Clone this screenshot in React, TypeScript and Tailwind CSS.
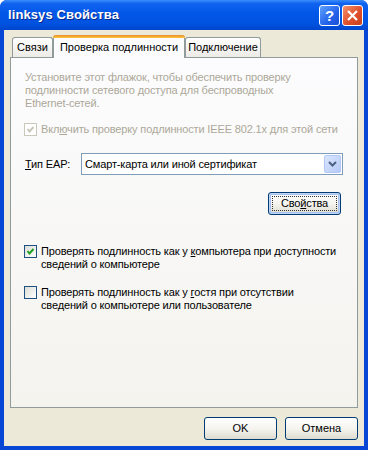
import React from "react";

const font = { fontFamily: '"Liberation Sans", Arial, sans-serif' };

function Check({ checked, disabled }: { checked?: boolean; disabled?: boolean }) {
  return (
    <div
      className={
        "w-[13px] h-[13px] shrink-0 border " +
        (disabled
          ? "border-[#cac8bb] bg-white"
          : "border-[#1c5180] bg-gradient-to-br from-[#dcdcd7] to-white")
      }
    >
      {checked && (
        <svg width="11" height="11" viewBox="0 0 11 11" className="block">
          <path
            d="M2.5 5 L4.5 7.5 L8.5 3"
            fill="none"
            stroke={disabled ? "#c9c7ba" : "#21a121"}
            strokeWidth="2"
          />
        </svg>
      )}
    </div>
  );
}

function XPButton({ children, focused, w }: { children: React.ReactNode; focused?: boolean; w: string }) {
  return (
    <div
      className={
        w +
        " h-[23px] rounded-[3px] border border-[#003c74] bg-gradient-to-b from-white via-[#f5f4ef] to-[#dedcd0] flex items-center justify-center text-[11px] text-black whitespace-nowrap " +
        (focused ? "shadow-[inset_0_0_0_1px_#c0d4f6,inset_0_0_0_2px_#a9c1ef]" : "")
      }
    >
      <div
        className={
          "flex items-center justify-center w-[calc(100%-8px)] h-[calc(100%-8px)] " +
          (focused ? "outline outline-1 outline-dotted outline-[#333]" : "")
        }
      >
        {children}
      </div>
    </div>
  );
}

export default function App() {
  return (
    <div
      className="w-[368px] h-[450px] flex flex-col bg-[#0847d6] rounded-t-[7px] overflow-hidden"
      style={font}
    >
      {/* Title bar */}
      <div className="h-[30px] shrink-0 flex items-center pl-[8px] pr-[5px] bg-[linear-gradient(to_bottom,#3b8cfc_0%,#0f63ee_12%,#0357e8_45%,#0052e0_80%,#0045cc_100%)]">
        <div className="flex-1 text-white font-bold text-[13px] [text-shadow:1px_1px_#0a2a8a] tracking-[0.1px]">
          linksys Свойства
        </div>
        <div className="flex gap-[2px] items-center">
          <div className="w-[21px] h-[21px] rounded-[3px] border border-white bg-[linear-gradient(135deg,#5fa2ff,#2563ea_60%,#1a4fd6)] flex items-center justify-center text-white font-bold text-[15px] leading-none">
            ?
          </div>
          <div className="w-[21px] h-[21px] rounded-[3px] border border-white bg-[linear-gradient(135deg,#f3936e,#e0512b_55%,#c8401e)] flex items-center justify-center">
            <svg width="13" height="13" viewBox="0 0 13 13">
              <path d="M2 2 L11 11 M11 2 L2 11" stroke="white" strokeWidth="2.2" />
            </svg>
          </div>
        </div>
      </div>

      {/* Body */}
      <div className="flex-1 mx-[4px] mb-[4px] bg-[#ece9d8] flex flex-col px-[6px] pt-[4px] pb-[6px]">
        {/* Tabs */}
        <div className="h-[23px] flex items-end pl-[2px] text-[11px] text-black relative z-10 whitespace-nowrap">
          <div className="w-[41px] h-[20px] border border-b-0 border-[#919b9c] rounded-t-[3px] bg-gradient-to-b from-white to-[#ecebe6] flex items-center justify-center">
            Связи
          </div>
          <div className="w-[132px] h-[23px] border-x border-[#919b9c] rounded-t-[3px] bg-[#fcfcfe] flex flex-col -mb-[1px]">
            <div className="h-[3px] rounded-t-[3px] bg-gradient-to-b from-[#e68b2c] to-[#ffc73c] -mx-[1px]" />
            <div className="flex-1 flex items-center justify-center pb-[1px]">Проверка подлинности</div>
          </div>
          <div className="w-[76px] h-[20px] border border-b-0 border-[#919b9c] rounded-t-[3px] bg-gradient-to-b from-white to-[#ecebe6] flex items-center justify-center">
            Подключение
          </div>
        </div>

        {/* Panel */}
        <div className="h-[351px] shrink-0 border border-[#919b9c] bg-gradient-to-b from-[#fcfcfe] to-[#f4f3ee] pl-[14px] pr-[4px] pt-[13px] text-[11px] leading-[13px] text-black whitespace-nowrap tracking-[-0.15px]">
          <div className="text-[#aca899]">
            Установите этот флажок, чтобы обеспечить проверку
            <br />
            подлинности сетевого доступа для беспроводных
            <br />
            Ethernet-сетей.
          </div>
          <div className="mt-[13px] flex items-center gap-[4px] -ml-[1px] text-[#aca899]">
            <Check checked disabled />
            <span>
              Вкл<span className="underline">ю</span>чить проверку подлинности IEEE 802.1x для этой сети
            </span>
          </div>

          <div className="mt-[17px] flex items-center">
            <div className="w-[56px]">
              <span className="underline">Т</span>ип EAP:
            </div>
            <div className="w-[262px] h-[22px] border border-[#7f9db9] bg-white flex items-center pl-[3px] pr-[1px]">
              <div className="flex-1">Смарт-карта или иной сертификат</div>
              <div className="w-[17px] h-[18px] rounded-[2px] border border-[#b4c8f6] bg-gradient-to-br from-[#dbe6fd] to-[#b4caf7] flex items-center justify-center">
                <svg width="9" height="6" viewBox="0 0 9 6">
                  <path d="M1 1 L4.5 4.5 L8 1" fill="none" stroke="#4d6185" strokeWidth="2" />
                </svg>
              </div>
            </div>
          </div>

          <div className="mt-[17px] flex justify-end pr-[12px]">
            <XPButton w="w-[73px]" focused>
              Сво<span className="underline">й</span>ства
            </XPButton>
          </div>

          <div className="mt-[30px] flex items-start gap-[4px] -ml-[1px]">
            <Check checked />
            <div>
              Проверять подлинность как у <span className="underline">к</span>омпьютера при доступности
              <br />
              сведений о компьютере
            </div>
          </div>

          <div className="mt-[15px] flex items-start gap-[4px] -ml-[1px]">
            <Check />
            <div>
              Проверять подлинность как у <span className="underline">г</span>остя при отсутствии
              <br />
              сведений о компьютере или пользователе
            </div>
          </div>
        </div>

        {/* Buttons */}
        <div className="mt-[9px] flex justify-end gap-[8px]">
          <XPButton w="w-[73px]">OK</XPButton>
          <XPButton w="w-[73px]">Отмена</XPButton>
        </div>
      </div>
    </div>
  );
}
